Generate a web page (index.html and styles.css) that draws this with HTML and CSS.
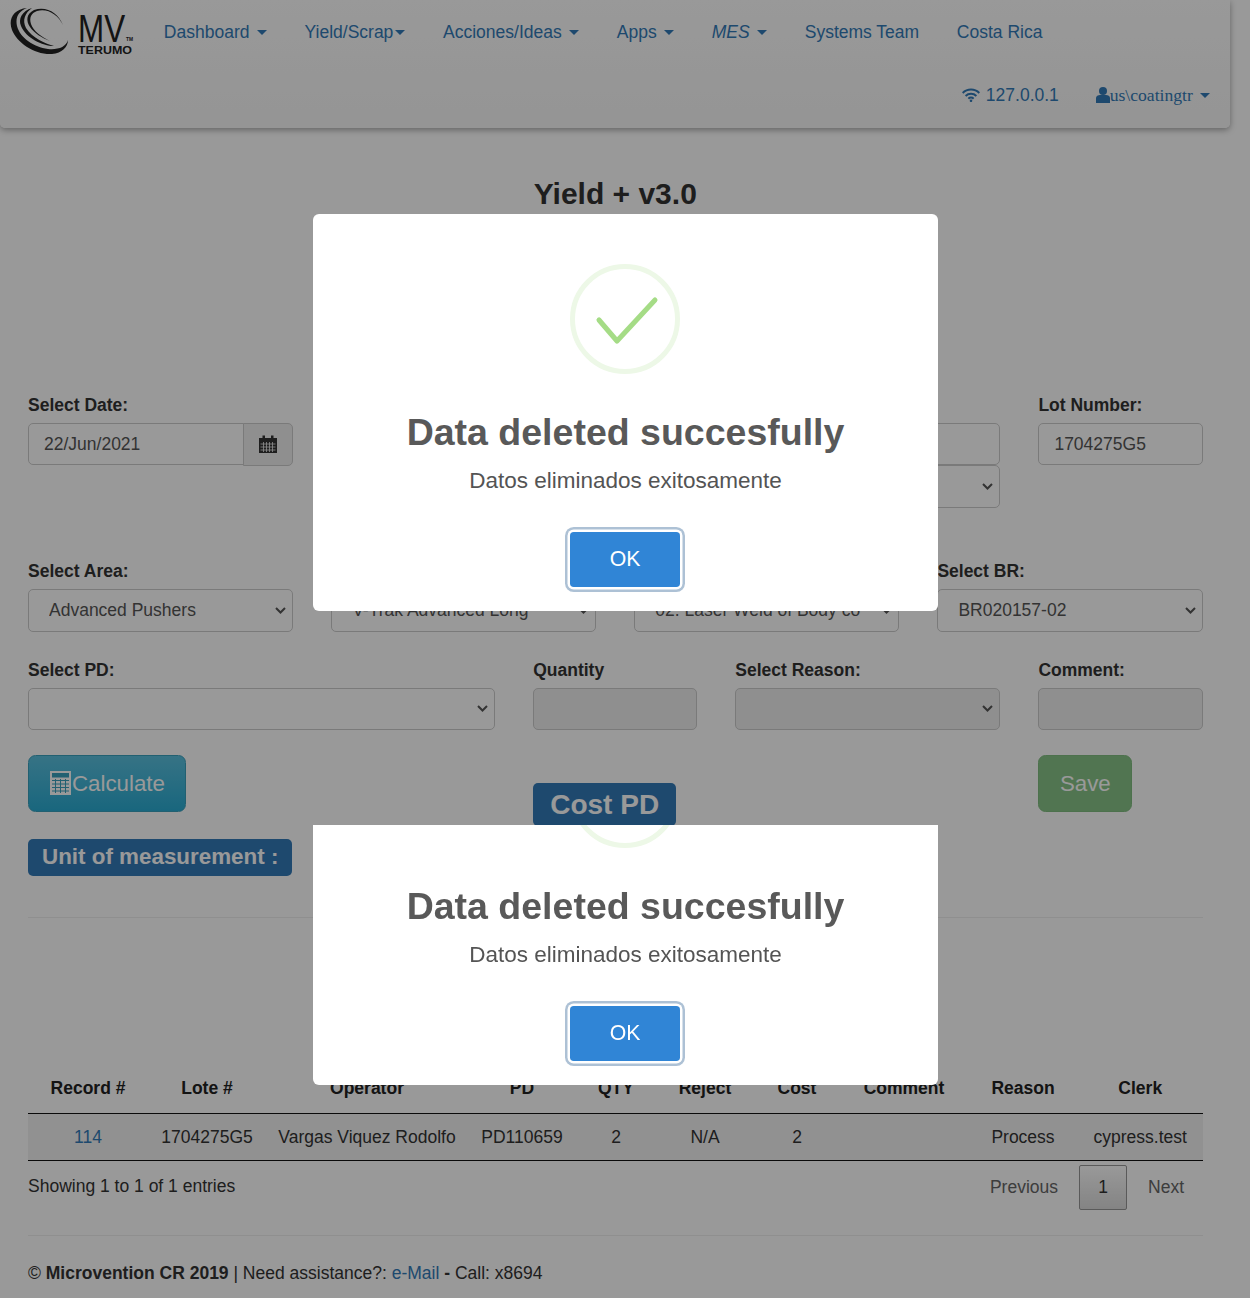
FILE: index.html
```html
<!DOCTYPE html>
<html>
<head>
    <title>Yield + v3.0</title>
    <link rel="stylesheet" href="styles.css">
</head>
<body>
    <nav class="navbar">
        <div class="nav-row">
            <a class="brand" href="#">
                <svg width="126" height="52" viewBox="0 0 126 52">
                    <path d="M17 2C3 3-2 14 2 24C7 37 25 49 42 48C52 47 58 41 58 34C56 41 48 44 38 43C24 41 10 32 7 20C5 11 9 5 17 2Z"/>
                    <path d="M22 2C12 5 8 13 11 20C16 32 32 40 44 40C36 38 22 32 16 22C12 14 15 7 22 2Z"/>
                    <path d="M24 4C16 8 16 15 20 21C24 27 32 32 40 35C32 31 23 25 21 18C19 12 21 7 27 5C38 2 48 9 53 19C48 7 37 0 24 4Z"/>
                    <text class="logo-mv" transform="translate(68 35.500) scale(.815 1)">MV</text>
                    <text class="logo-tm" x="116" y="35" textLength="7" lengthAdjust="spacingAndGlyphs">TM</text>
                    <text class="logo-terumo" x="68" y="47.500" textLength="54" lengthAdjust="spacingAndGlyphs">TERUMO</text>
                </svg>
            </a>
            <a class="nav-link" href="#">Dashboard <span class="caret"></span></a>
            <a class="nav-link" href="#">Yield/Scrap<span class="caret tight"></span></a>
            <a class="nav-link" href="#">Acciones/Ideas <span class="caret"></span></a>
            <a class="nav-link" href="#">Apps <span class="caret"></span></a>
            <a class="nav-link italic" href="#">MES <span class="caret"></span></a>
            <a class="nav-link" href="#">Systems Team</a>
            <a class="nav-link" href="#">Costa Rica</a>
        </div>
        <div class="nav-row nav-right">
            <a class="nav-link" href="#">
                <svg class="wifi-icon" width="18" height="14" viewBox="0 0 18 14">
                    <path d="M.7 5a11.800 11.800 0 0 1 16.600 0M3.600 8a7.700 7.700 0 0 1 10.800 0M6.400 10.700a3.600 3.600 0 0 1 5.200 0" fill="none" stroke="#337ab7" stroke-width="2"/>
                    <circle cx="9" cy="12.800" r="1.300" fill="#337ab7"/>
                </svg>
                127.0.0.1
            </a>
            <a class="nav-link user-link" href="#">
                <svg class="user-icon" width="14" height="16" viewBox="0 0 14 16">
                    <circle cx="7" cy="4" r="4" fill="#337ab7"/>
                    <path d="M0 16V11C0 9 2 8 4 8H10C12 8 14 9 14 11V16Z" fill="#337ab7"/>
                </svg><span class="user-name">us\coatingtr</span> <span class="caret"></span>
            </a>
        </div>
    </nav>

    <div class="page">
        <h3 class="title">Yield + v3.0</h3>

        <div class="form-row row-one">
            <div class="field span-3">
                <label>Select Date:</label>
                <div class="date-group">
                    <input class="control" type="text" value="22/Jun/2021">
                    <span class="addon">
                        <svg width="18" height="18" viewBox="0 0 18 18">
                            <path d="M0 3H18V18H0Z" fill="#333"/>
                            <rect x="3.500" y="0.500" width="2.500" height="4" fill="#333"/>
                            <rect x="12" y="0.500" width="2.500" height="4" fill="#333"/>
                            <path d="M1.500 9H16.500M1.500 12H16.500M1.500 15H16.500M4.500 7V17M7.500 7V17M10.500 7V17M13.500 7V17" stroke="#eee" stroke-width="0.800"/>
                        </svg>
                    </span>
                </div>
            </div>
            <div class="field no-label start-8 span-3">
                <input class="control" type="text">
                <select class="control"><option></option></select>
            </div>
            <div class="field start-11 span-2">
                <label>Lot Number:</label>
                <input class="control" type="text" value="1704275G5">
            </div>
        </div>

        <div class="form-row row-two">
            <div class="field span-3">
                <label>Select Area:</label>
                <select class="control"><option>Advanced Pushers</option></select>
            </div>
            <div class="field no-label span-3">
                <select class="control"><option>V-Trak Advanced Long</option></select>
            </div>
            <div class="field no-label span-3">
                <select class="control"><option>02. Laser Weld of Body co</option></select>
            </div>
            <div class="field span-3">
                <label>Select BR:</label>
                <select class="control"><option>BR020157-02</option></select>
            </div>
        </div>

        <div class="form-row row-three">
            <div class="field span-5">
                <label>Select PD:</label>
                <select class="control"><option></option></select>
            </div>
            <div class="field span-2">
                <label>Quantity</label>
                <input class="control" type="text" disabled>
            </div>
            <div class="field span-3">
                <label>Select Reason:</label>
                <select class="control" disabled><option></option></select>
            </div>
            <div class="field span-2">
                <label>Comment:</label>
                <input class="control" type="text" disabled>
            </div>
        </div>

        <div class="form-row actions">
            <div class="span-5">
                <button class="btn btn-info" type="button">
                    <svg width="23" height="24" viewBox="0 0 23 24">
                        <rect x="1" y="0" width="21" height="24" fill="#fff"/>
                        <rect x="3" y="2" width="17" height="4.500" fill="#3aa0bd"/>
                        <path d="M3 9.500H20M3 13H20M3 16.500H20M3 20H20M6.500 8V22M11.500 8V22M16.500 8V22" stroke="#3aa0bd" stroke-width="1"/>
                    </svg>Calculate
                </button>
            </div>
            <div class="span-3">
                <span class="badge cost-badge">Cost PD</span>
            </div>
            <div class="start-11 span-2">
                <button class="btn btn-success" type="button">Save</button>
            </div>
        </div>

        <span class="badge unit-badge">Unit of measurement :</span>

        <hr class="rule rule-top">

        <table class="data-table">
            <thead>
                <tr>
                    <th>Record #</th>
                    <th>Lote #</th>
                    <th>Operator</th>
                    <th>PD</th>
                    <th>QTY</th>
                    <th>Reject</th>
                    <th>Cost</th>
                    <th>Comment</th>
                    <th>Reason</th>
                    <th>Clerk</th>
                </tr>
            </thead>
            <tbody>
                <tr>
                    <td><a href="#">114</a></td>
                    <td>1704275G5</td>
                    <td>Vargas Viquez Rodolfo</td>
                    <td>PD110659</td>
                    <td>2</td>
                    <td>N/A</td>
                    <td>2</td>
                    <td></td>
                    <td>Process</td>
                    <td>cypress.test</td>
                </tr>
            </tbody>
        </table>

        <div class="table-footer">
            <div class="info">Showing 1 to 1 of 1 entries</div>
            <div class="pagination">
                <a class="page-btn" href="#">Previous</a>
                <a class="page-btn current" href="#">1</a>
                <a class="page-btn" href="#">Next</a>
            </div>
        </div>

        <hr class="rule rule-bottom">

        <p class="footer">&copy; <b>Microvention CR 2019</b> | Need assistance?: <a href="#">e-Mail</a> <b>-</b> Call: x8694</p>
    </div>

    <div class="overlay">
        <div class="modal modal-first">
            <svg class="ring" width="110" height="110" viewBox="0 0 110 110">
                <circle cx="55" cy="55" r="52.500" fill="none" stroke="#edf8e7" stroke-width="5"/>
                <path d="M29 56L47 77L85 36" fill="none" stroke="#a5dc86" stroke-width="5" stroke-linecap="round" stroke-linejoin="round"/>
            </svg>
            <h2 class="modal-title">Data deleted succesfully</h2>
            <div class="modal-text">Datos eliminados exitosamente</div>
            <button class="modal-ok" type="button">OK</button>
        </div>
        <div class="modal modal-second">
            <svg class="ring" width="110" height="110" viewBox="0 0 110 110">
                <circle cx="55" cy="55" r="52.500" fill="none" stroke="#edf8e7" stroke-width="5"/>
            </svg>
            <h2 class="modal-title">Data deleted succesfully</h2>
            <div class="modal-text">Datos eliminados exitosamente</div>
            <button class="modal-ok" type="button">OK</button>
        </div>
    </div>
</body>
</html>
```

FILE: styles.css
```css
* {
    box-sizing: border-box;
}

body {
    margin: 0;
    height: 1298px;
    overflow: hidden;
    background-color: white;
    color: #333;
    font-family: "Liberation Sans", Arial, sans-serif;
    font-size: 17.5px;
    line-height: 25px;
}

a {
    color: #337ab7;
    text-decoration: none;
}

/* navbar */
.navbar {
    width: 1230px;
    height: 128px;
    background: linear-gradient(to bottom, #fff, #f8f8f8);
    border-radius: 0 0 5px 5px;
    box-shadow: 0 2px 6px rgba(0, 0, 0, 0.35);
}

.nav-row {
    display: flex;
    align-items: center;
    height: 64px;
}

.nav-right {
    justify-content: flex-end;
    height: 62px;
    padding-right: 1px;
}

.brand {
    display: block;
    width: 145px;
    height: 64px;
    padding: 6px 0 0 10px;
}

.brand svg {
    display: block;
    fill: #222;
}

.logo-mv {
    font-family: "Liberation Sans", Arial, sans-serif;
    font-size: 38.5px;
}

.logo-tm {
    font-family: "Liberation Sans", Arial, sans-serif;
    font-size: 5px;
    font-weight: bold;
}

.logo-terumo {
    font-family: "Liberation Sans", Arial, sans-serif;
    font-size: 10.5px;
    font-weight: bold;
}

.nav-link {
    padding: 0 18.85px;
    white-space: nowrap;
}

.user-link {
    padding-left: 18px;
}

.italic {
    font-style: italic;
}

.caret {
    display: inline-block;
    width: 0;
    height: 0;
    margin-left: 2.5px;
    vertical-align: middle;
    border-top: 5px solid #337ab7;
    border-left: 5px solid transparent;
    border-right: 5px solid transparent;
}

.caret.tight {
    margin-left: 2px;
}

.wifi-icon {
    vertical-align: -1px;
    margin-right: 1px;
}

.user-icon {
    vertical-align: -2px;
}

.user-name {
    font-family: "Liberation Serif", "Times New Roman", serif;
    font-size: 17.6px;
}

/* form */
.page {
    width: 1230.5px;
    padding: 0 28px;
}

.title {
    margin: 49px 0 182px;
    text-align: center;
    color: #333;
    font-size: 30px;
    line-height: 33px;
    font-weight: bold;
}

.form-row {
    display: grid;
    grid-template-columns: repeat(12, 1fr);
    column-gap: 38px;
    align-items: start;
}

.span-2 { grid-column-end: span 2; }
.span-3 { grid-column-end: span 3; }
.span-5 { grid-column-end: span 5; }
.start-8 { grid-column-start: 8; }
.start-11 { grid-column-start: 11; }

.row-one {
    height: 116px;
    margin-bottom: 50px;
}

.row-two,
.row-three {
    margin-bottom: 25px;
}

.field label {
    display: block;
    padding-top: 1px;
    margin-bottom: 5px;
    font-weight: bold;
}

.no-label {
    padding-top: 31px;
}

.control {
    display: block;
    width: 100%;
    height: 42.5px;
    padding: 0 15px;
    background-color: white;
    border: 1px solid #ccc;
    border-radius: 5px;
    color: #555;
    font-family: inherit;
    font-size: 17.5px;
    opacity: 1;
}

select.control {
    appearance: none;
    padding-left: 20px;
    background-image: url("data:image/svg+xml,%3Csvg xmlns='http://www.w3.org/2000/svg' width='11' height='7'%3E%3Cpath d='M1 1l4.500 4.500L10 1' fill='none' stroke='%23555' stroke-width='2'/%3E%3C/svg%3E");
    background-repeat: no-repeat;
    background-position: right 6px center;
}

.row-one input.control {
    height: 42px;
}

.row-one select.control {
    height: 43px;
}

input.control[disabled],
select.control[disabled] {
    background-color: #eee;
}

.date-group {
    display: flex;
}

.date-group .control {
    flex: 1;
    min-width: 0;
    border-radius: 5px 0 0 5px;
}

.addon {
    display: flex;
    align-items: center;
    justify-content: center;
    width: 50px;
    height: 42.5px;
    margin-left: -1px;
    background-color: #eee;
    border: 1px solid #ccc;
    border-radius: 0 5px 5px 0;
}

.actions {
    height: 71px;
}

.btn {
    display: inline-block;
    height: 57px;
    padding: 0 20px;
    border: 1px solid transparent;
    border-radius: 7.5px;
    color: white;
    font-family: inherit;
    font-size: 22.3px;
}

.btn svg {
    vertical-align: -4px;
}

.btn-info {
    background: linear-gradient(to bottom, #5bc0de, #2aabd2);
    border-color: #3aa0bd;
}

.btn-success {
    padding: 0 20.5px;
    background-color: #87c387;
    border-color: #80bd80;
}

.badge {
    display: inline-block;
    background-color: #337ab7;
    border-radius: 5px;
    color: white;
    font-weight: bold;
}

.cost-badge {
    margin-top: 28px;
    padding: 0 17px;
    height: 43px;
    font-size: 28px;
    line-height: 43px;
}

.unit-badge {
    display: block;
    width: 264px;
    height: 37px;
    margin-top: 13px;
    padding-left: 14px;
    font-size: 22.4px;
    line-height: 35px;
    white-space: nowrap;
}

.rule {
    margin: 0;
    border: 0;
    border-top: 1px solid #eee;
}

.rule-top {
    margin: 41px 0 145px;
}

/* table */
.data-table {
    width: 100%;
    border-collapse: collapse;
    table-layout: fixed;
}

.data-table th {
    height: 50px;
    padding: 1px 0 0;
    border-bottom: 1px solid #111;
    color: #222;
    text-align: center;
    font-weight: bold;
}

.data-table td {
    height: 47px;
    padding: 1px 0 0;
    background-color: #f2f2f2;
    border-bottom: 1px solid #111;
    text-align: center;
}

.data-table th:nth-child(1) { width: 120px; }
.data-table th:nth-child(2) { width: 118px; }
.data-table th:nth-child(3) { width: 202px; }
.data-table th:nth-child(4) { width: 108px; }
.data-table th:nth-child(5) { width: 80px; }
.data-table th:nth-child(6) { width: 98px; }
.data-table th:nth-child(7) { width: 86px; }
.data-table th:nth-child(8) { width: 128px; }
.data-table th:nth-child(9) { width: 110px; }

.table-footer {
    display: flex;
    justify-content: space-between;
    margin-top: 4px;
}

.info {
    padding-top: 9px;
}

.pagination {
    display: flex;
    align-items: center;
    height: 45px;
    padding-right: 18.5px;
}

.page-btn {
    padding: 0 20px;
    color: #666;
}

.page-btn:last-child {
    padding-right: 0;
}

.page-btn.current {
    height: 45px;
    width: 48px;
    margin: 0 1px;
    padding: 0;
    text-align: center;
    line-height: 43px;
    background: linear-gradient(to bottom, #fff, #dcdcdc);
    border: 1px solid #979797;
    border-radius: 2px;
    color: #333;
}

.rule-bottom {
    margin-top: 25px;
}

.footer {
    margin: 25px 0 0;
}

/* alert dialogs */
.overlay {
    position: fixed;
    top: 0;
    left: 0;
    right: 0;
    bottom: 0;
    background-color: rgba(0, 0, 0, 0.4);
}

.modal {
    position: absolute;
    left: 313px;
    width: 625px;
    overflow: hidden;
    background-color: white;
    text-align: center;
    padding-bottom: 25px;
}

.modal-first {
    top: 214px;
    height: 397px;
    padding-top: 50px;
    border-radius: 6px;
}

.modal-second {
    top: 825px;
    height: 260px;
    border-radius: 0 0 6px 6px;
}

.ring {
    display: block;
    margin: 0 0 0 257px;
}

.modal-second .ring {
    margin-top: -87px;
}

.modal-title {
    margin: 36px 0 10px;
    color: #595959;
    font-size: 37.5px;
    line-height: 45px;
    font-weight: bold;
}

.modal-text {
    color: #545454;
    font-size: 22.5px;
    line-height: 31px;
}

.modal-ok {
    display: block;
    width: 110px;
    height: 55px;
    margin: 35.5px 0 0 257px;
    background-color: #3085d6;
    border: 0;
    border-radius: 3.75px;
    box-shadow: 0 0 0 2.5px white, 0 0 0 5px rgba(50, 100, 150, 0.4);
    color: white;
    font-family: inherit;
    font-size: 21.25px;
}
```
